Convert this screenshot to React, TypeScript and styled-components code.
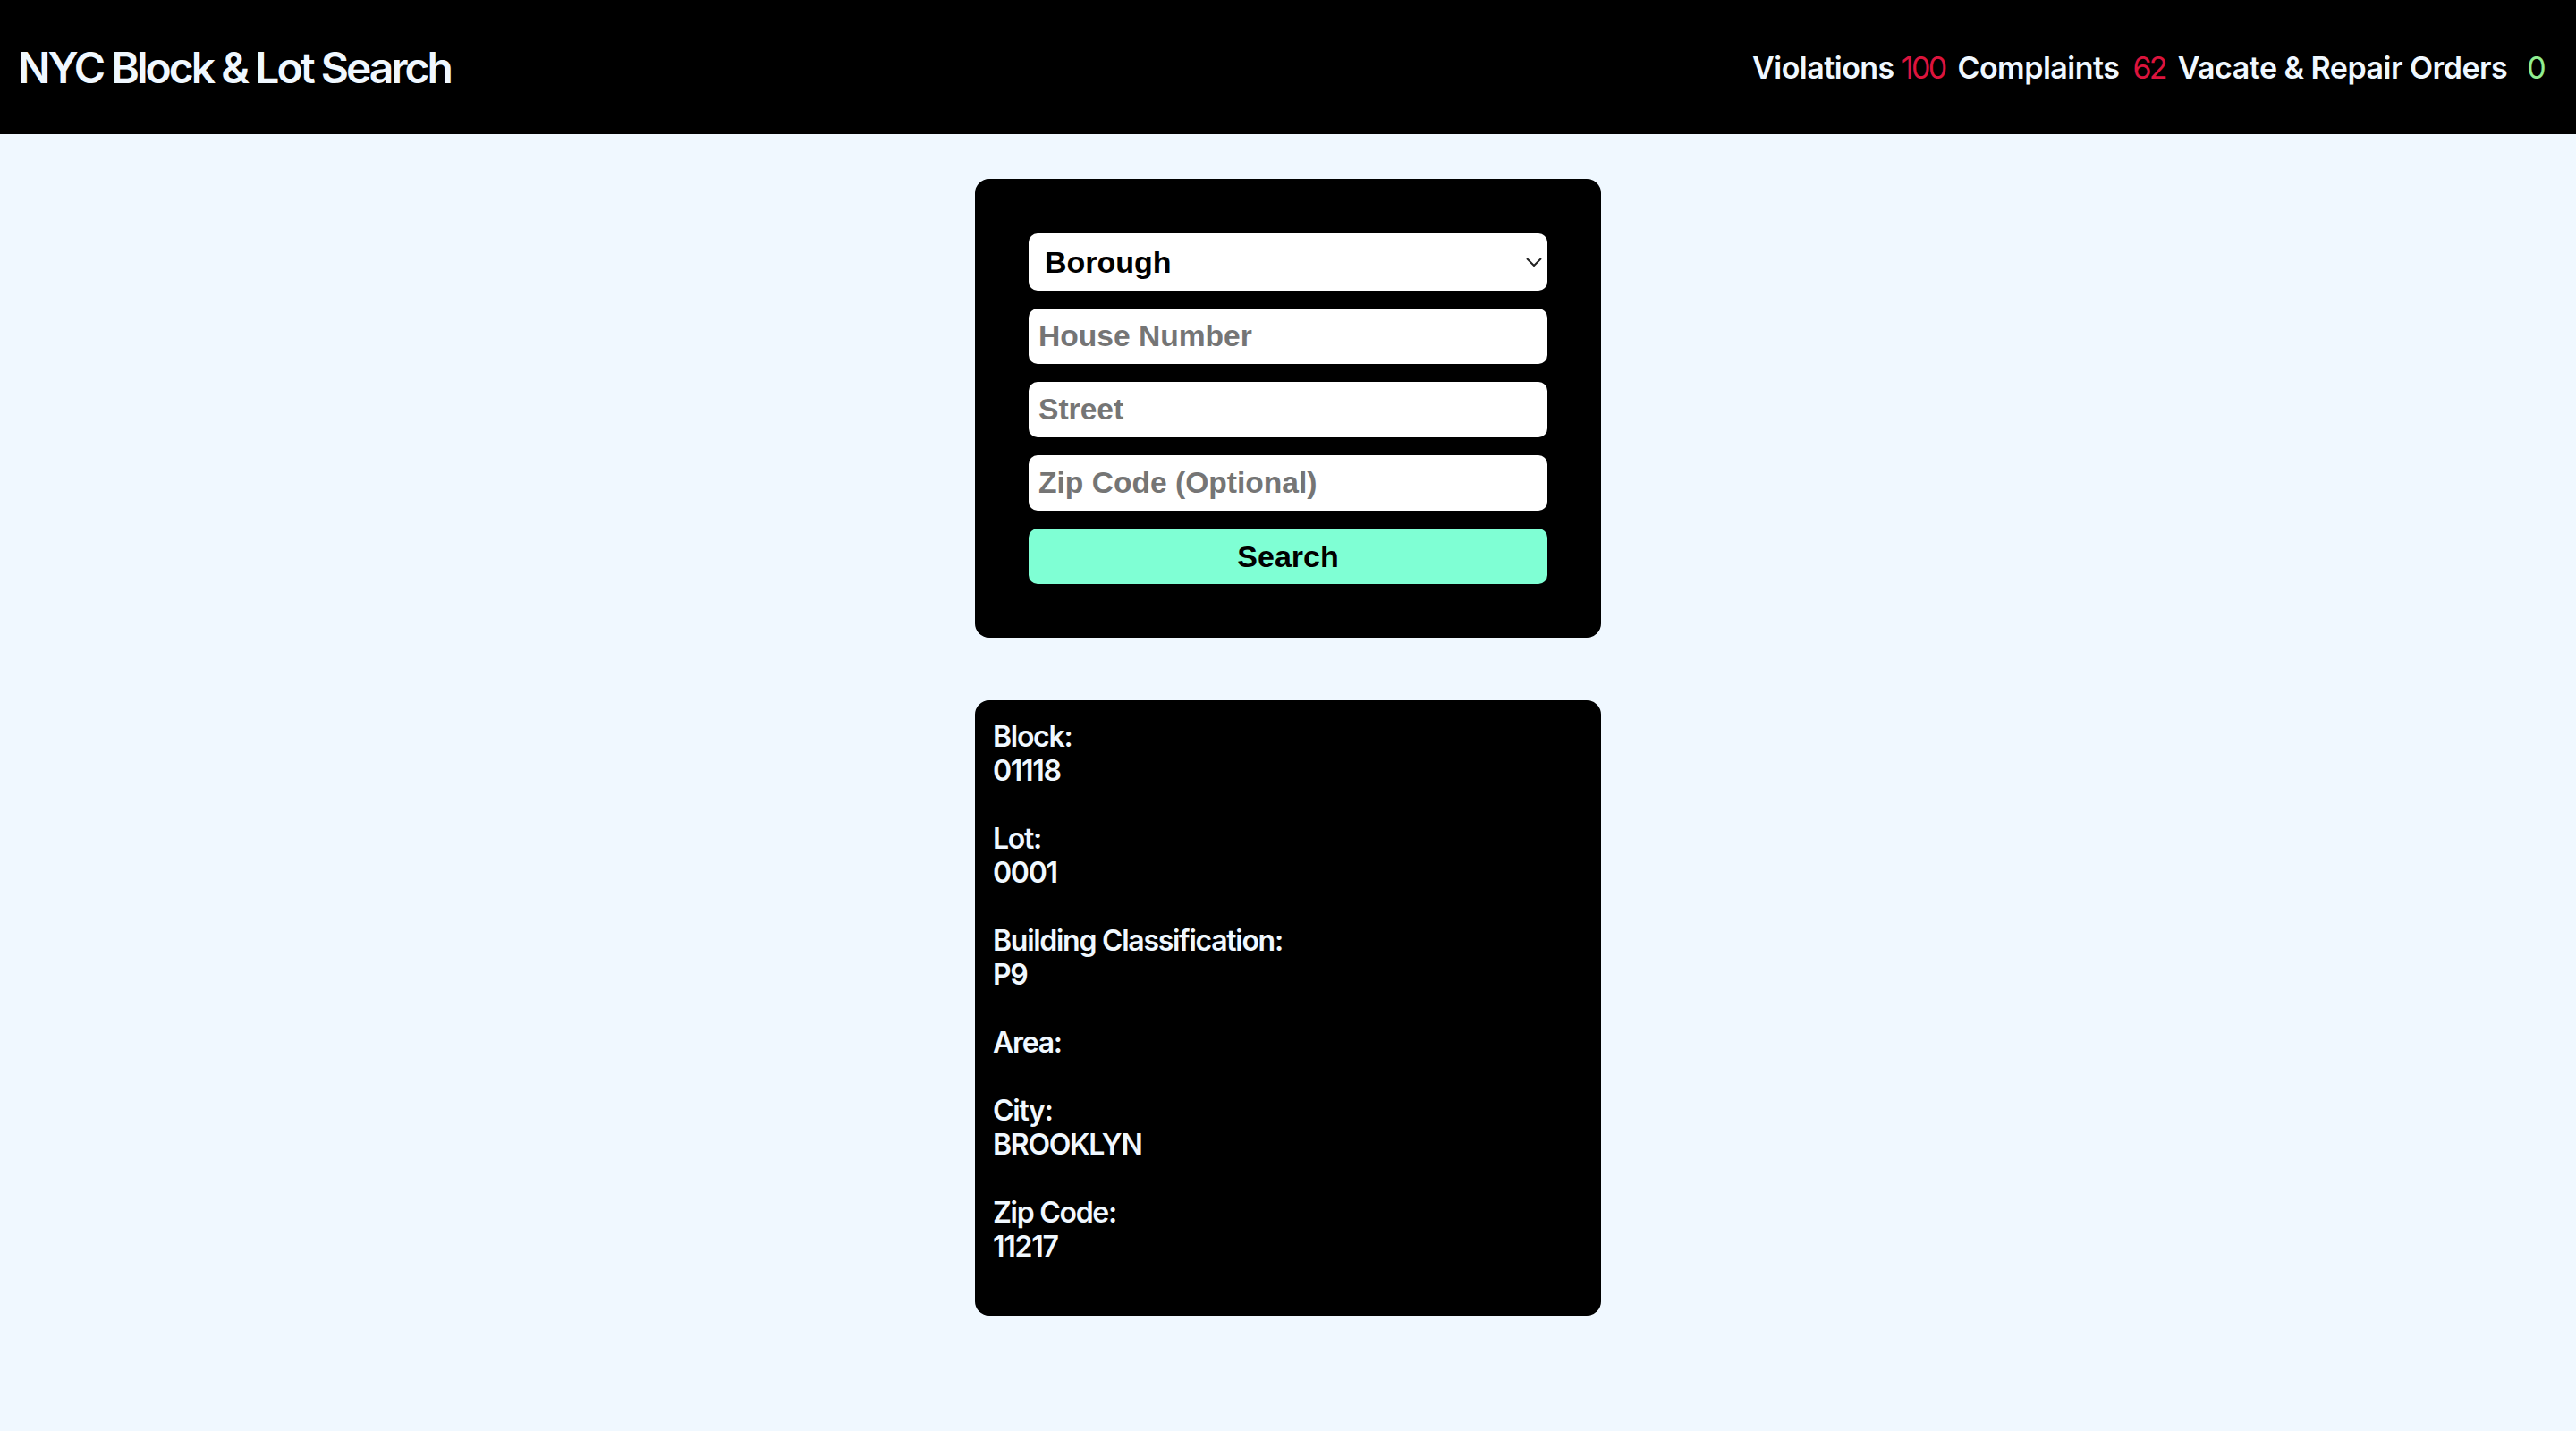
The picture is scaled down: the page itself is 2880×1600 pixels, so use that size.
import styled, { createGlobalStyle } from "styled-components";

const GlobalStyle = createGlobalStyle`
  html, body {
    margin: 0;
    padding: 0;
    background-color: aliceblue;
    font-family: "Inter", "Liberation Sans", sans-serif;
  }
  * {
    box-sizing: border-box;
  }
`;

const Header = styled.header`
  height: 150px;
  background-color: #000;
  color: aliceblue;
  display: flex;
  justify-content: space-between;
  align-items: center;
  padding: 0 36px 0 20px;
`;

const Title = styled.h1`
  margin: 0;
  font-size: 48px;
  font-weight: 600;
  letter-spacing: -0.062em;
`;

const Stats = styled.nav`
  display: flex;
  align-items: baseline;
  gap: 14px;
`;

const Stat = styled.div<{ $gap: number }>`
  display: flex;
  align-items: baseline;
  gap: ${(p) => p.$gap}px;
  font-size: 34px;
`;

const StatLabel = styled.span`
  font-weight: 600;
  letter-spacing: -0.015em;
`;

const StatCount = styled.span<{ $color: string }>`
  font-weight: 400;
  color: ${(p) => p.$color};
  letter-spacing: -0.08em;
`;

const Main = styled.main`
  display: flex;
  flex-direction: column;
  align-items: center;
  padding: 50px 0 130px;
  gap: 70px;
`;

const Card = styled.section`
  width: 700px;
  background-color: #000;
  border-radius: 16px;
`;

const SearchForm = styled(Card).attrs({ as: "form" })`
  padding: 61px 60px 60px;
  display: flex;
  flex-direction: column;
  gap: 20px;
`;

const SelectWrap = styled.div`
  position: relative;
  width: 100%;
`;

const Select = styled.select`
  appearance: none;
  width: 100%;
  height: 64px;
  border: none;
  border-radius: 10px;
  background-color: #fff;
  padding: 0 18px;
  font-family: "Liberation Sans", Arial, sans-serif;
  font-size: 34px;
  font-weight: 700;
  color: #000;
`;

const Chevron = styled.svg`
  position: absolute;
  right: 6px;
  top: 50%;
  transform: translateY(-50%);
  pointer-events: none;
`;

const Input = styled.input`
  width: 100%;
  height: 62px;
  border: none;
  border-radius: 10px;
  background-color: #fff;
  padding: 0 11px;
  font-family: "Liberation Sans", Arial, sans-serif;
  font-size: 33.6px;
  font-weight: 700;
  color: #000;

  &::placeholder {
    color: #757575;
  }
`;

const SearchButton = styled.button`
  width: 100%;
  height: 62px;
  border: none;
  border-radius: 10px;
  background-color: aquamarine;
  font-family: "Liberation Sans", Arial, sans-serif;
  font-size: 34px;
  font-weight: 700;
  color: #000;
`;

const Results = styled(Card)`
  padding: 22px 20px 20px;
  color: aliceblue;
  font-size: 32px;
  font-weight: 600;
  line-height: 38px;
  letter-spacing: -0.04em;
`;

const Field = styled.div`
  margin-bottom: 38px;
`;

const stats = [
  { label: "Violations", count: 100, color: "crimson", gap: 8 },
  { label: "Complaints", count: 62, color: "crimson", gap: 15 },
  { label: "Vacate & Repair Orders", count: 0, color: "lightgreen", gap: 22 },
];

const fields = [
  { label: "Block:", value: "01118" },
  { label: "Lot:", value: "0001" },
  { label: "Building Classification:", value: "P9" },
  { label: "Area:", value: "" },
  { label: "City:", value: "BROOKLYN" },
  { label: "Zip Code:", value: "11217" },
];

export default function App() {
  return (
    <>
      <GlobalStyle />
      <Header>
        <Title>NYC Block &amp; Lot Search</Title>
        <Stats>
          {stats.map((s) => (
            <Stat key={s.label} $gap={s.gap}>
              <StatLabel>{s.label}</StatLabel>
              <StatCount $color={s.color}>{s.count}</StatCount>
            </Stat>
          ))}
        </Stats>
      </Header>
      <Main>
        <SearchForm onSubmit={(e: React.FormEvent) => e.preventDefault()}>
          <SelectWrap>
            <Select defaultValue="">
              <option value="">Borough</option>
              <option value="1">Manhattan</option>
              <option value="2">Bronx</option>
              <option value="3">Brooklyn</option>
              <option value="4">Queens</option>
              <option value="5">Staten Island</option>
            </Select>
            <Chevron width="18" height="10" viewBox="0 0 18 10">
              <path d="M1 1l8 8 8-8" fill="none" stroke="#222" strokeWidth="2" />
            </Chevron>
          </SelectWrap>
          <Input placeholder="House Number" />
          <Input placeholder="Street" />
          <Input placeholder="Zip Code (Optional)" />
          <SearchButton type="submit">Search</SearchButton>
        </SearchForm>
        <Results>
          {fields.map((f) => (
            <Field key={f.label}>
              <div>{f.label}</div>
              {f.value && <div>{f.value}</div>}
            </Field>
          ))}
        </Results>
      </Main>
    </>
  );
}
